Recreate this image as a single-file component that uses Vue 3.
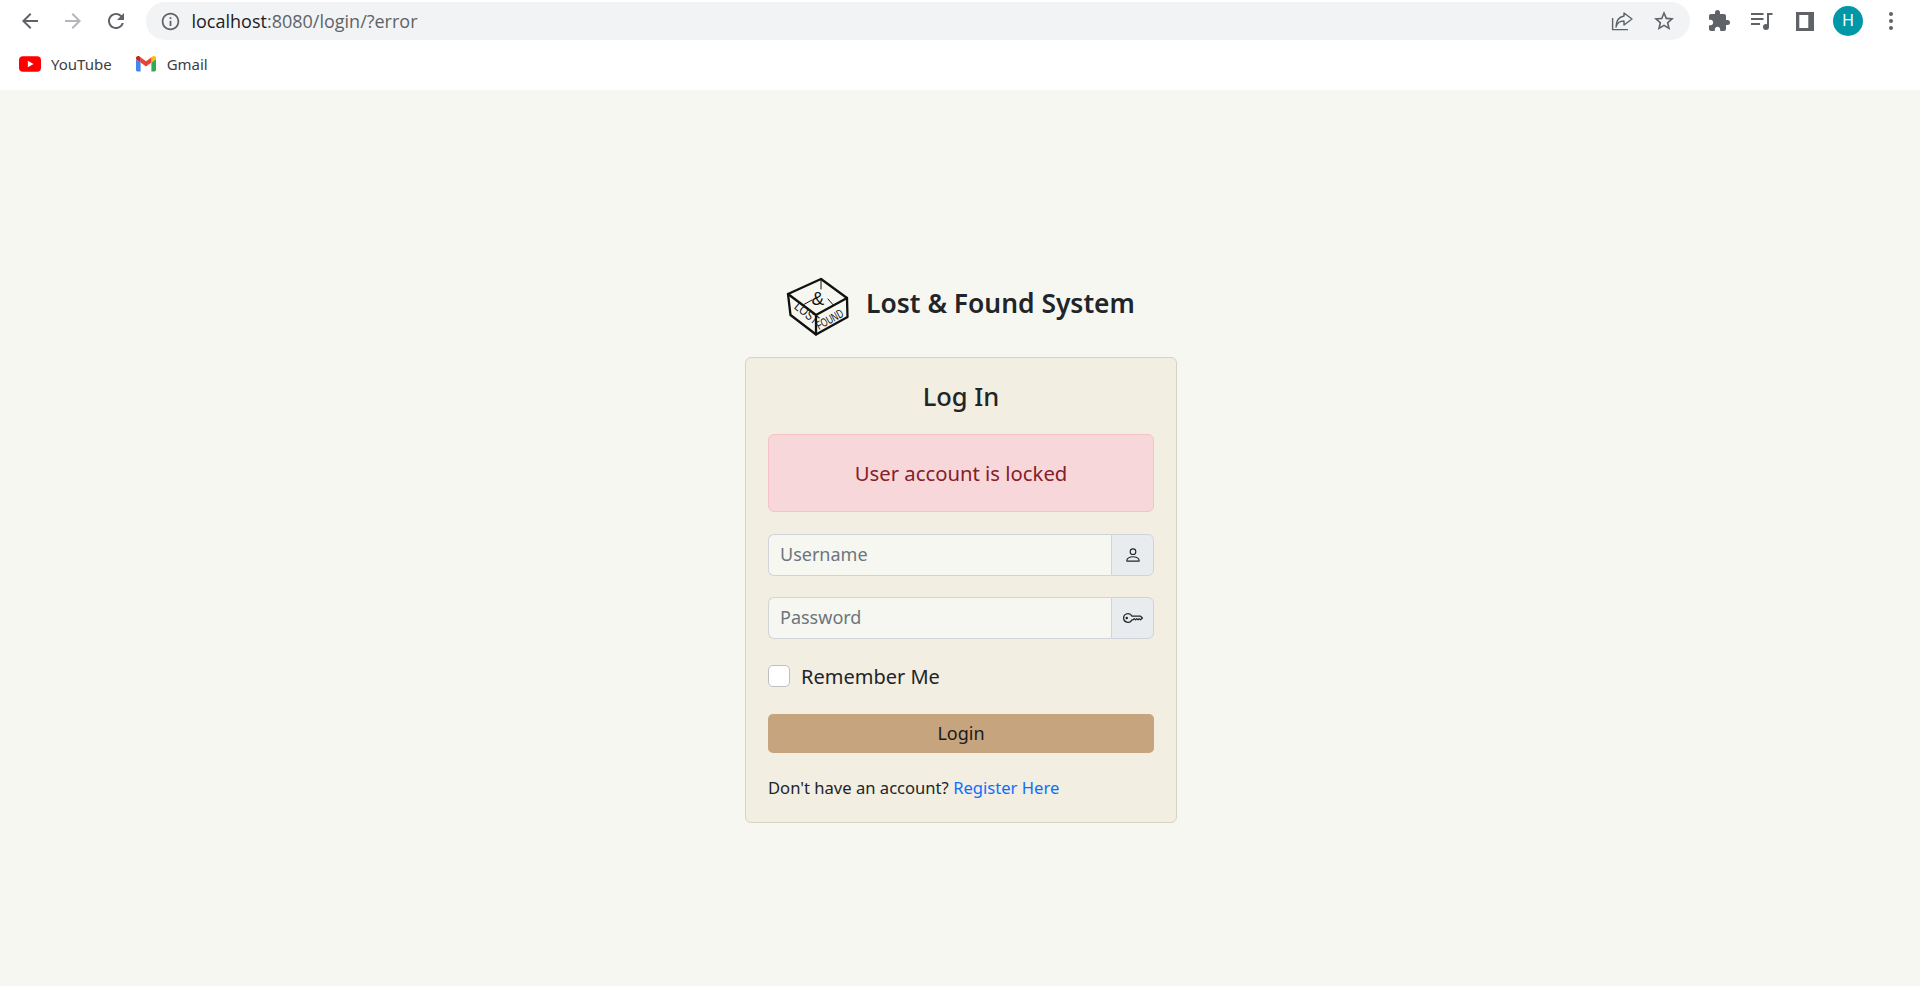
<script setup>
const username = ''
</script>

<template>
  <div class="page">
    <header class="chrome">
      <div class="toolbar">
        <button class="tb"><svg width="24" height="24" viewBox="0 0 24 24"><path class="ic" d="M20 11H7.83l5.59-5.59L12 4l-8 8 8 8 1.41-1.41L7.83 13H20v-2z"/></svg></button>
        <button class="tb"><svg width="24" height="24" viewBox="0 0 24 24"><path class="ic dim" d="M4 11h12.17l-5.59-5.59L12 4l8 8-8 8-1.41-1.41L16.17 13H4v-2z"/></svg></button>
        <button class="tb"><svg width="24" height="24" viewBox="0 0 24 24"><path class="ic" d="M17.65 6.35A7.958 7.958 0 0 0 12 4c-4.42 0-7.99 3.58-7.99 8s3.57 8 7.99 8c3.73 0 6.84-2.55 7.73-6h-2.08A5.99 5.99 0 0 1 12 18c-3.31 0-6-2.69-6-6s2.69-6 6-6c1.66 0 3.14.69 4.22 1.78L13 11h7V4l-2.35 2.35z"/></svg></button>
        <div class="omni">
          <svg class="info" width="24" height="24" viewBox="0 0 24 24"><path class="ic" d="M11 7h2v2h-2zm0 4h2v6h-2zm1-9C6.48 2 2 6.48 2 12s4.48 10 10 10 10-4.48 10-10S17.52 2 12 2zm0 18c-4.41 0-8-3.59-8-8s3.59-8 8-8 8 3.59 8 8-3.59 8-8 8z"/></svg>
          <span class="url"><span class="host">localhost</span>:8080/login/?error</span>
          <span class="spring"></span>
          <svg width="24" height="24" viewBox="0 0 24 24" class="share"><path d="M14 4l8 6-8 6v-4c-4 0-7 2-8 6 0-6 3-10 8-11z" fill="none" stroke="#5f6368" stroke-width="1.4" stroke-linejoin="round"/><path d="M2.6 9v11.600H18" fill="none" stroke="#5f6368" stroke-width="1.4"/></svg>
          <svg width="24" height="24" viewBox="0 0 24 24" class="star"><path class="ic" d="M22 9.24l-7.19-.62L12 2 9.19 8.63 2 9.24l5.46 4.73L5.820 21 12 17.27 18.18 21l-1.63-7.03L22 9.24zM12 15.4l-3.76 2.27 1-4.28-3.32-2.88 4.38-.38L12 6.1l1.71 4.04 4.38.38-3.32 2.88 1 4.28L12 15.4z"/></svg>
        </div>
        <button class="tb"><svg width="24" height="24" viewBox="0 0 24 24"><path class="ic" d="M20.5 11H19V7c0-1.1-.9-2-2-2h-4V3.5a2.5 2.5 0 0 0-5 0V5H4c-1.100 0-1.99.9-1.99 2v3.8H3.5c1.49 0 2.7 1.21 2.7 2.7s-1.21 2.7-2.7 2.7H2V20c0 1.100.9 2 2 2h3.8v-1.5c0-1.49 1.21-2.7 2.7-2.7s2.7 1.21 2.7 2.7V22H17c1.100 0 2-.9 2-2v-4h1.5a2.5 2.5 0 0 0 0-5z"/></svg></button>
        <button class="tb"><svg width="24" height="24" viewBox="0 0 24 24"><path d="M1 5h12.5M1 10h12.5M1 15h9M18 18V5h4.5" fill="none" stroke="#5f6368" stroke-width="2"/><circle cx="16" cy="18" r="3" fill="#5f6368"/></svg></button>
        <button class="tb"><svg width="24" height="24" viewBox="0 0 24 24"><path class="ic" fill-rule="evenodd" d="M3 3h18v19H3zM6.300 6v13h9V6z"/></svg></button>
        <button class="tb"><span class="avatar">H</span></button>
        <button class="tb"><svg width="24" height="24" viewBox="0 0 24 24"><circle class="ic" cx="12" cy="5" r="2"/><circle class="ic" cx="12" cy="12" r="2"/><circle class="ic" cx="12" cy="19" r="2"/></svg></button>
      </div>
      <nav class="bookmarks">
        <a class="bm">
          <svg width="22" height="16" viewBox="0 0 22 16"><rect width="22" height="15.4" y=".3" rx="4" fill="#f00"/><path d="M8.8 4.7l5.8 3.3-5.8 3.3z" fill="#fff"/></svg>
          <span>YouTube</span>
        </a>
        <a class="bm gm">
          <svg width="20" height="16" viewBox="0 0 20 16"><path d="M1.4 15.5A1.4 1.4 0 0 1 0 14.1V3l4.6 3.4v9.1z" fill="#4285f4"/><path d="M15.4 15.5V6.4L20 3v11.1a1.4 1.4 0 0 1-1.4 1.4z" fill="#34a853"/><path d="M15.4 1.2V6.4L20 3V2C20 .4 18 -.4 16.8.3z" fill="#fbbc04"/><path d="M4.6 6.4V1.2L10 5.2l5.4-4V6.4L10 10.4z" fill="#ea4335"/><path d="M0 2v1l4.6 3.4V1.2L3.2.3C2-.4 0 .4 0 2z" fill="#c5221f"/></svg>
          <span>Gmail</span>
        </a>
      </nav>
    </header>

    <main class="main">
      <div class="brand">
        <svg class="logo" width="64" height="58" viewBox="0 0 64 58">
          <g fill="none" stroke="#111" stroke-linejoin="round" stroke-linecap="round">
            <path stroke-width="2.3" d="M34 1 1 16 3.500 37 29 56.500 60.500 39 60 20 34 1Z"/>
            <path stroke-width="2.300" d="M1 16 29 37 60 20M29 37V56.500"/>
            <path stroke-width="1" d="M34 1V11M16.500 26.700 25 22M41 21 46 26.700"/>
          </g>
          <text class="lt amp" x="24.500" y="26.500">&amp;</text>
          <text class="lt" font-size="13" textLength="27" lengthAdjust="spacingAndGlyphs" transform="translate(6.500 30) rotate(39)">LOST</text>
          <text class="lt" font-size="12" textLength="29" lengthAdjust="spacingAndGlyphs" transform="translate(32 52) rotate(-29)">FOUND</text>
        </svg>
        <h1 class="title">Lost &amp; Found System</h1>
      </div>

      <form class="card" @submit.prevent>
        <h2 class="heading">Log In</h2>
        <div class="alert">User account is locked</div>

        <div class="group">
          <input class="field" type="text" placeholder="Username" :value="username" />
          <span class="addon">
            <svg width="18" height="18" viewBox="0 0 16 16"><path fill="#212529" d="M8 8a3 3 0 1 0 0-6 3 3 0 0 0 0 6Zm2-3a2 2 0 1 1-4 0 2 2 0 0 1 4 0Zm4 8c0 1-1 1-1 1H3s-1 0-1-1 1-4 6-4 6 3 6 4Zm-1-.004c-.001-.246-.154-.986-.832-1.664C11.516 10.68 10.289 10 8 10c-2.29 0-3.516.68-4.168 1.332-.678.678-.83 1.418-.832 1.664h10Z"/></svg>
          </span>
        </div>

        <div class="group">
          <input class="field" type="password" placeholder="Password" />
          <span class="addon">
            <svg width="20" height="20" viewBox="0 0 16 16"><path fill="#212529" d="M0 8a4 4 0 0 1 7.465-2H14a.5.5 0 0 1 .354.146l1.5 1.5a.5.5 0 0 1 0 .708l-1.5 1.5a.5.5 0 0 1-.708 0L13 9.207l-.646.647a.5.5 0 0 1-.708 0L11 9.207l-.646.647a.5.5 0 0 1-.708 0L9 9.207l-.646.647A.5.5 0 0 1 8 10h-.535A4 4 0 0 1 0 8zm4-3a3 3 0 1 0 2.712 4.285A.5.5 0 0 1 7.163 9h.63l.853-.854a.5.5 0 0 1 .708 0l.646.647.646-.647a.5.5 0 0 1 .708 0l.646.647.646-.647a.5.5 0 0 1 .708 0l.646.647.793-.793-1-1h-6.63a.5.5 0 0 1-.451-.285A3 3 0 0 0 4 5z"/><path fill="#212529" d="M4 8a1 1 0 1 1-2 0 1 1 0 0 1 2 0z"/></svg>
          </span>
        </div>

        <label class="remember">
          <input class="check" type="checkbox" />
          <span>Remember Me</span>
        </label>

        <button class="login" type="submit">Login</button>

        <p class="register">Don't have an account? <a class="link" href="#">Register Here</a></p>
      </form>
    </main>
  </div>
</template>

<style>
html, body { margin: 0; padding: 0; background: #f7f7f2; }
</style>

<style scoped>
* { box-sizing: border-box; }
.page {
  height: 986px;
  overflow: hidden;
  display: flex;
  flex-direction: column;
  background: #f7f7f2;
  font-family: "Noto Sans", "Open Sans", sans-serif;
  color: #212529;
}
.chrome { background: #fff; height: 90px; flex: none; }
.toolbar {
  display: flex;
  align-items: center;
  height: 42px;
  padding: 0 7.5px 0 8px;
}
.tb {
  flex: none;
  width: 43px;
  height: 38px;
  display: flex;
  align-items: center;
  justify-content: center;
  border: 0;
  padding: 0;
  background: none;
}
.ic { fill: #5f6368; }
.dim { fill: #b4b6b9; }
.omni {
  flex: 1;
  height: 38px;
  margin: 0 7.5px 0 8.5px;
  border-radius: 19px;
  background: #f1f3f4;
  display: flex;
  align-items: center;
  padding: 0 14px 0 14px;
}
.info { flex: none; width: 21px; height: 21px; }
.url {
  margin-left: 11px;
  font-family: "Open Sans", "Noto Sans", sans-serif;
  font-size: 18px;
  color: #5f6368;
  white-space: nowrap;
}
.host { color: #202124; }
.spring { flex: 1; }
.share { margin-right: 18px; }
.bookmarks {
  display: flex;
  align-items: center;
  height: 43px;
  padding: 0 0 0 19px;
  gap: 24px;
}
.bm {
  display: flex;
  align-items: center;
  gap: 10px;
  font-size: 15px;
  color: #3c4043;
}
.gm { gap: 11px; }
.avatar {
  width: 30px;
  height: 30px;
  border-radius: 50%;
  background: #0097a7;
  color: #fff;
  font-size: 16px;
  display: flex;
  align-items: center;
  justify-content: center;
}
.main {
  flex: 1;
  display: flex;
  flex-direction: column;
  align-items: center;
  padding: 189px 0 0 2px;
}
.brand {
  display: flex;
  align-items: center;
  gap: 15px;
  height: 56px;
  margin-bottom: 22px;
}
.logo { flex: none; overflow: visible; }
.lt { font-family: "Liberation Sans", sans-serif; fill: #111; }
.amp { font-size: 19px; }
.title {
  margin: 0 0 7px;
  font-size: 26.400px;
  font-weight: 600;
  line-height: 1.2;
}
.card {
  width: 432px;
  padding: 23px 22px 22px;
  background: #f2eee1;
  border: 1px solid #d6d3c2;
  border-radius: 6px;
}
.heading {
  margin: 0 0 23px;
  font-size: 25.500px;
  font-weight: 500;
  line-height: 30px;
  text-align: center;
}
.alert {
  height: 78px;
  margin-bottom: 22px;
  display: flex;
  align-items: center;
  justify-content: center;
  font-size: 20.300px;
  background: #f8d7da;
  border: 1px solid #f5c2c7;
  border-radius: 6px;
  color: #842029;
}
.group {
  display: flex;
  height: 42px;
  margin-bottom: 21px;
}
.field {
  flex: 1;
  min-width: 0;
  padding: 0 11px 2px;
  font: inherit;
  font-size: 18px;
  color: #212529;
  background: #f7f7f2;
  border: 1px solid #ced4da;
  border-right: 0;
  border-radius: 6px 0 0 6px;
  outline: none;
}
.field::placeholder { color: #6c757d; opacity: 1; }
.addon {
  flex: none;
  width: 43px;
  display: flex;
  align-items: center;
  justify-content: center;
  background: #e9ecef;
  border: 1px solid #ced4da;
  border-radius: 0 6px 6px 0;
}
.remember {
  display: flex;
  align-items: center;
  gap: 11px;
  height: 24px;
  margin: 25px 0 26px;
  font-size: 20px;
}
.check {
  appearance: none;
  width: 22px;
  height: 22px;
  margin: 0;
  background: #fff;
  border: 1px solid #bfbfbf;
  border-radius: 5px;
}
.login {
  display: block;
  width: 100%;
  height: 39px;
  padding: 0 0 2px;
  border: 0;
  border-radius: 5px;
  background: #c6a47e;
  font: inherit;
  font-size: 18px;
  color: #1a1a1a;
}
.register {
  margin: 22px 0 0;
  font-size: 16.600px;
  line-height: 25px;
}
.link { color: #0d6efd; text-decoration: none; }
</style>
